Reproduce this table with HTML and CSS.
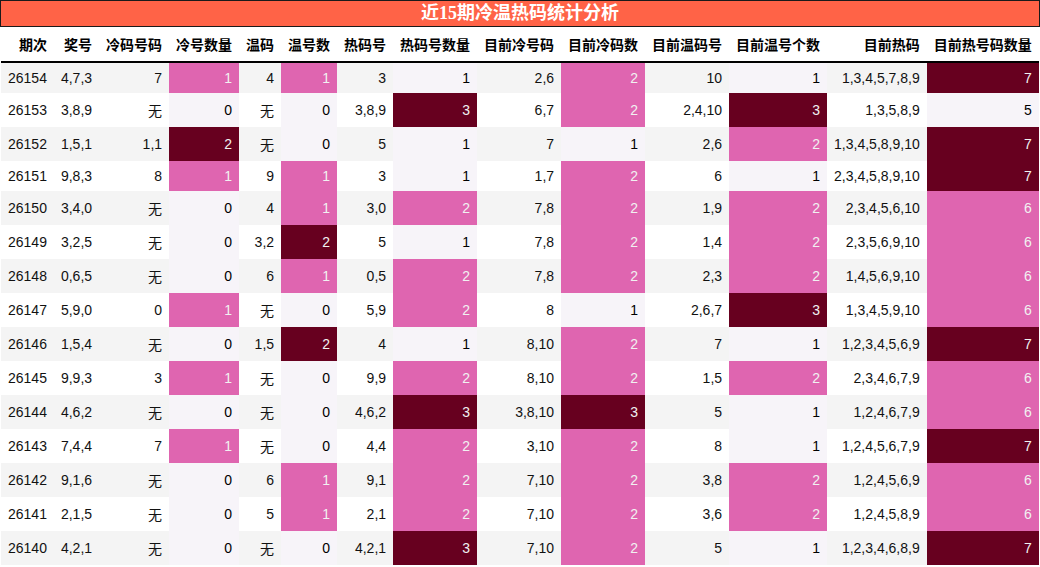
FILE: index.html
```html
<!DOCTYPE html>
<html lang="zh">
<head>
<meta charset="utf-8">
<title>近15期冷温热码统计分析</title>
<link rel="stylesheet" href="styles.css">
</head>
<body>
<div class="report">
  <div class="title">近15期冷温热码统计分析</div>
  <table class="stats">
    <thead>
      <tr>
        <th>期次</th><th>奖号</th><th>冷码号码</th><th>冷号数量</th><th>温码</th><th>温号数</th><th>热码号</th><th>热码号数量</th><th>目前冷号码</th><th>目前冷码数</th><th>目前温码号</th><th>目前温号个数</th><th>目前热码</th><th>目前热号码数量</th>
      </tr>
    </thead>
    <tbody>
      <tr><td>26154</td><td>4,7,3</td><td>7</td><td class="mid">1</td><td>4</td><td class="mid">1</td><td>3</td><td class="lo">1</td><td>2,6</td><td class="mid">2</td><td>10</td><td class="lo">1</td><td>1,3,4,5,7,8,9</td><td class="hi">7</td></tr>
      <tr><td>26153</td><td>3,8,9</td><td>无</td><td class="lo">0</td><td>无</td><td class="lo">0</td><td>3,8,9</td><td class="hi">3</td><td>6,7</td><td class="mid">2</td><td>2,4,10</td><td class="hi">3</td><td>1,3,5,8,9</td><td class="lo">5</td></tr>
      <tr><td>26152</td><td>1,5,1</td><td>1,1</td><td class="hi">2</td><td>无</td><td class="lo">0</td><td>5</td><td class="lo">1</td><td>7</td><td class="lo">1</td><td>2,6</td><td class="mid">2</td><td>1,3,4,5,8,9,10</td><td class="hi">7</td></tr>
      <tr><td>26151</td><td>9,8,3</td><td>8</td><td class="mid">1</td><td>9</td><td class="mid">1</td><td>3</td><td class="lo">1</td><td>1,7</td><td class="mid">2</td><td>6</td><td class="lo">1</td><td>2,3,4,5,8,9,10</td><td class="hi">7</td></tr>
      <tr><td>26150</td><td>3,4,0</td><td>无</td><td class="lo">0</td><td>4</td><td class="mid">1</td><td>3,0</td><td class="mid">2</td><td>7,8</td><td class="mid">2</td><td>1,9</td><td class="mid">2</td><td>2,3,4,5,6,10</td><td class="mid">6</td></tr>
      <tr><td>26149</td><td>3,2,5</td><td>无</td><td class="lo">0</td><td>3,2</td><td class="hi">2</td><td>5</td><td class="lo">1</td><td>7,8</td><td class="mid">2</td><td>1,4</td><td class="mid">2</td><td>2,3,5,6,9,10</td><td class="mid">6</td></tr>
      <tr><td>26148</td><td>0,6,5</td><td>无</td><td class="lo">0</td><td>6</td><td class="mid">1</td><td>0,5</td><td class="mid">2</td><td>7,8</td><td class="mid">2</td><td>2,3</td><td class="mid">2</td><td>1,4,5,6,9,10</td><td class="mid">6</td></tr>
      <tr><td>26147</td><td>5,9,0</td><td>0</td><td class="mid">1</td><td>无</td><td class="lo">0</td><td>5,9</td><td class="mid">2</td><td>8</td><td class="lo">1</td><td>2,6,7</td><td class="hi">3</td><td>1,3,4,5,9,10</td><td class="mid">6</td></tr>
      <tr><td>26146</td><td>1,5,4</td><td>无</td><td class="lo">0</td><td>1,5</td><td class="hi">2</td><td>4</td><td class="lo">1</td><td>8,10</td><td class="mid">2</td><td>7</td><td class="lo">1</td><td>1,2,3,4,5,6,9</td><td class="hi">7</td></tr>
      <tr><td>26145</td><td>9,9,3</td><td>3</td><td class="mid">1</td><td>无</td><td class="lo">0</td><td>9,9</td><td class="mid">2</td><td>8,10</td><td class="mid">2</td><td>1,5</td><td class="mid">2</td><td>2,3,4,6,7,9</td><td class="mid">6</td></tr>
      <tr><td>26144</td><td>4,6,2</td><td>无</td><td class="lo">0</td><td>无</td><td class="lo">0</td><td>4,6,2</td><td class="hi">3</td><td>3,8,10</td><td class="hi">3</td><td>5</td><td class="lo">1</td><td>1,2,4,6,7,9</td><td class="mid">6</td></tr>
      <tr><td>26143</td><td>7,4,4</td><td>7</td><td class="mid">1</td><td>无</td><td class="lo">0</td><td>4,4</td><td class="mid">2</td><td>3,10</td><td class="mid">2</td><td>8</td><td class="lo">1</td><td>1,2,4,5,6,7,9</td><td class="hi">7</td></tr>
      <tr><td>26142</td><td>9,1,6</td><td>无</td><td class="lo">0</td><td>6</td><td class="mid">1</td><td>9,1</td><td class="mid">2</td><td>7,10</td><td class="mid">2</td><td>3,8</td><td class="mid">2</td><td>1,2,4,5,6,9</td><td class="mid">6</td></tr>
      <tr><td>26141</td><td>2,1,5</td><td>无</td><td class="lo">0</td><td>5</td><td class="mid">1</td><td>2,1</td><td class="mid">2</td><td>7,10</td><td class="mid">2</td><td>3,6</td><td class="mid">2</td><td>1,2,4,5,8,9</td><td class="mid">6</td></tr>
      <tr><td>26140</td><td>4,2,1</td><td>无</td><td class="lo">0</td><td>无</td><td class="lo">0</td><td>4,2,1</td><td class="hi">3</td><td>7,10</td><td class="mid">2</td><td>5</td><td class="lo">1</td><td>1,2,3,4,6,8,9</td><td class="hi">7</td></tr>
    </tbody>
  </table>
</div>
</body>
</html>
```

FILE: styles.css
```css
body {
  margin: 0;
  background: #ffffff;
}

.report {
  width: 1040px;
}

.title {
  box-sizing: border-box;
  height: 27px;
  border: 1px solid #1a1a1a;
  background: #ff6347;
  color: #ffffff;
  font-family: "Liberation Serif", "Noto Sans CJK SC", serif;
  font-weight: bold;
  font-size: 18px;
  line-height: 25px;
  text-align: center;
}

.stats {
  border-collapse: collapse;
  margin-left: 1px;
  font-family: "Liberation Sans", "Noto Sans CJK SC", sans-serif;
  font-size: 14px;
  color: #111111;
}

.stats th,
.stats td {
  padding: 7px;
  text-align: right;
  white-space: nowrap;
}

.stats thead th {
  font-weight: bold;
  color: #000000;
  border-bottom: 2px solid #000000;
}

.stats tbody tr:nth-child(odd) {
  background: #f4f4f4;
}

.stats td.lo {
  background: #f7f4f9;
  color: #000000;
}

.stats td.mid {
  background: #df65b0;
  color: #f1f1f1;
}

.stats td.hi {
  background: #67001f;
  color: #f1f1f1;
}
```
